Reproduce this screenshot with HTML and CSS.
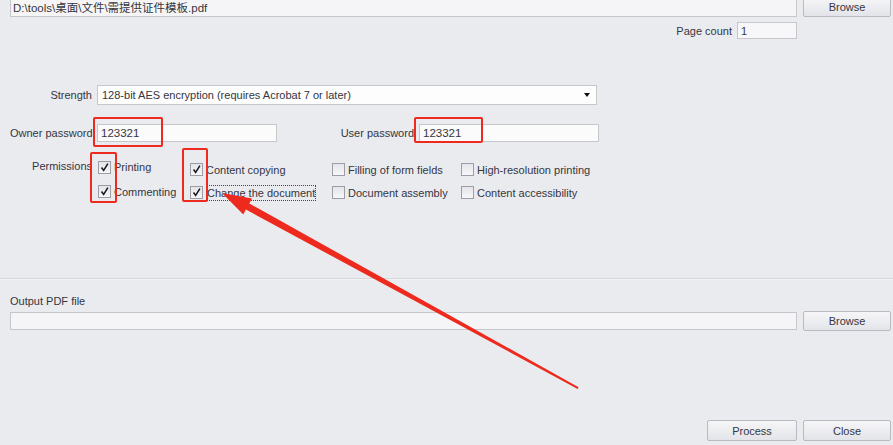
FILE: index.html
```html
<!DOCTYPE html>
<html lang="en">

<head>
    <meta charset="UTF-8">
    <title>Encrypt PDF</title>
    <link rel="stylesheet" href="styles.css">
</head>

<body>
    <div class="dialog">
        <div class="file-row top">
            <div class="field grow">D:\tools\桌面\文件\需提供证件模板.pdf</div>
            <button class="btn">Browse</button>
        </div>

        <div class="count-row">
            <span>Page count</span>
            <div class="field count">1</div>
        </div>

        <div class="form-row strength">
            <label class="lbl">Strength</label>
            <div class="select">
                128-bit AES encryption (requires Acrobat 7 or later)
                <span class="caret"></span>
            </div>
        </div>

        <div class="form-row passwords">
            <label class="lbl">Owner password</label>
            <div class="field pass">123321</div>
            <label class="lbl user">User password</label>
            <div class="field pass">123321</div>
        </div>

        <div class="form-row perms">
            <label class="lbl">Permissions</label>
            <div class="perm-grid">
                <div class="perm"><span class="check on"><svg viewBox="0 0 13 13"><path d="M3 6.5 L5.5 10 L10.5 2" /></svg></span>Printing</div>
                <div class="perm"><span class="check on"><svg viewBox="0 0 13 13"><path d="M3 6.5 L5.5 10 L10.5 2" /></svg></span>Content copying</div>
                <div class="perm"><span class="check"></span>Filling of form fields</div>
                <div class="perm"><span class="check"></span>High-resolution printing</div>
                <div class="perm"><span class="check on"><svg viewBox="0 0 13 13"><path d="M3 6.5 L5.5 10 L10.5 2" /></svg></span>Commenting</div>
                <div class="perm"><span class="check on"><svg viewBox="0 0 13 13"><path d="M3 6.5 L5.5 10 L10.5 2" /></svg></span><span class="focus">Change the document</span></div>
                <div class="perm"><span class="check"></span>Document assembly</div>
                <div class="perm"><span class="check"></span>Content accessibility</div>
            </div>
        </div>

        <div class="separator"></div>

        <div class="out-label">Output PDF file</div>
        <div class="file-row out">
            <div class="field grow"></div>
            <button class="btn">Browse</button>
        </div>

        <div class="actions">
            <button class="btn process">Process</button>
            <button class="btn">Close</button>
        </div>
    </div>

    <!-- annotations drawn over the screenshot -->
    <div class="mark m1"></div>
    <div class="mark m2"></div>
    <div class="mark m3"></div>
    <div class="mark m4"></div>
    <svg class="arrow" width="893" height="445" viewBox="0 0 893 445">
        <polygon points="222,193 252,198.6 249.3,203.4 578.6,387.3 577.6,388.9 245.9,209.6 243.3,214.4" />
    </svg>
</body>

</html>
```

FILE: styles.css
```css
body {
    margin: 0;
    background: #eaebef;
    color: #35363f;
    font-family: 'Liberation Sans', 'Noto Sans CJK SC', sans-serif;
    font-size: 11px;
    overflow: hidden;
}

.dialog {
    width: 893px;
    height: 445px;
    box-sizing: border-box;
    padding: 0 2px 0 10px;
}

.field {
    box-sizing: border-box;
    background: #f5f5f7;
    border: 1px solid #c6c7cd;
    padding: 0 3px;
    display: flex;
    align-items: center;
    white-space: nowrap;
}

.grow {
    flex: 1;
}

.btn {
    box-sizing: border-box;
    width: 88px;
    height: 20px;
    border: 1px solid #b9bac2;
    border-radius: 2px;
    background: linear-gradient(#f6f6f8, #e3e4e9);
    color: #35363f;
    font-family: inherit;
    font-size: 11px;
    padding: 0;
}

.file-row {
    display: flex;
    align-items: center;
    gap: 6px;
}

.file-row.top {
    margin-top: -3px;
}

.file-row.top .field {
    height: 19px;
    font-size: 11.5px;
    padding-left: 2px;
}

.count-row {
    display: flex;
    justify-content: flex-end;
    align-items: center;
    gap: 5px;
    margin: 5px 94px 0 0;
}

.field.count {
    width: 60px;
    height: 17px;
    background: #f7f7f9;
}

.form-row {
    display: flex;
    align-items: center;
}

.lbl {
    width: 82px;
    text-align: right;
    margin-right: 5px;
    white-space: nowrap;
}

.strength {
    margin-top: 46px;
}

.select {
    box-sizing: border-box;
    width: 500px;
    height: 20px;
    background: #fdfdfd;
    border: 1px solid #c6c7cd;
    padding: 0 4px;
    display: flex;
    align-items: center;
    justify-content: space-between;
}

.caret {
    width: 0;
    height: 0;
    border-left: 3.5px solid transparent;
    border-right: 3.5px solid transparent;
    border-top: 4px solid #111;
    margin-right: 2px;
}

.passwords {
    margin-top: 19px;
}

.field.pass {
    width: 180px;
    height: 18px;
    background: #fbfbfc;
    font-size: 11.5px;
}

.lbl.user {
    width: 137px;
}

.perms {
    margin-top: 16px;
    align-items: flex-start;
}

.perms .lbl {
    margin-top: 2px;
}

.perm-grid {
    display: grid;
    grid-template-columns: 92px 142px 129px 140px;
    grid-auto-rows: 23px;
    margin-left: 1px;
}

.perm {
    display: flex;
    align-items: center;
    gap: 3px;
    white-space: nowrap;
}

.perm:first-child {
    margin-top: -5px;
}

.perm:nth-child(5) {
    margin-top: -2px;
}

.check {
    box-sizing: border-box;
    width: 13px;
    height: 13px;
    border: 1px solid #9c9da6;
    background: linear-gradient(#e4e5ea, #f7f7f9);
    flex: none;
}

.check svg {
    display: block;
    width: 11px;
    height: 11px;
}

.check path {
    fill: none;
    stroke: #16161c;
    stroke-width: 1.8;
}

.focus {
    border: 1px dotted #44454f;
    padding: 1px 0;
}

.separator {
    margin: 74px 0 0 -10px;
    width: 893px;
    height: 1px;
    background: #d7d8dd;
    border-bottom: 1px solid #f1f1f4;
}

.out-label {
    margin-top: 14px;
    line-height: 14px;
}

.file-row.out {
    margin-top: 3px;
}

.file-row.out .field {
    height: 18px;
}

.actions {
    display: flex;
    justify-content: flex-end;
    gap: 6px;
    margin-top: 89px;
}

.actions .btn {
    height: 21px;
}

.btn.process {
    width: 90px;
}

.mark {
    position: absolute;
    box-sizing: border-box;
    border: 2px solid #ee2a1e;
    border-radius: 2px;
}

.m1 {
    left: 93px;
    top: 117px;
    width: 70px;
    height: 30px;
}

.m2 {
    left: 414px;
    top: 117px;
    width: 69px;
    height: 26px;
}

.m3 {
    left: 90px;
    top: 152px;
    width: 27px;
    height: 51px;
}

.m4 {
    left: 182px;
    top: 148px;
    width: 26px;
    height: 54px;
}

.arrow {
    position: absolute;
    left: 0;
    top: 0;
}

.arrow polygon {
    fill: #ee2a1e;
}
```
